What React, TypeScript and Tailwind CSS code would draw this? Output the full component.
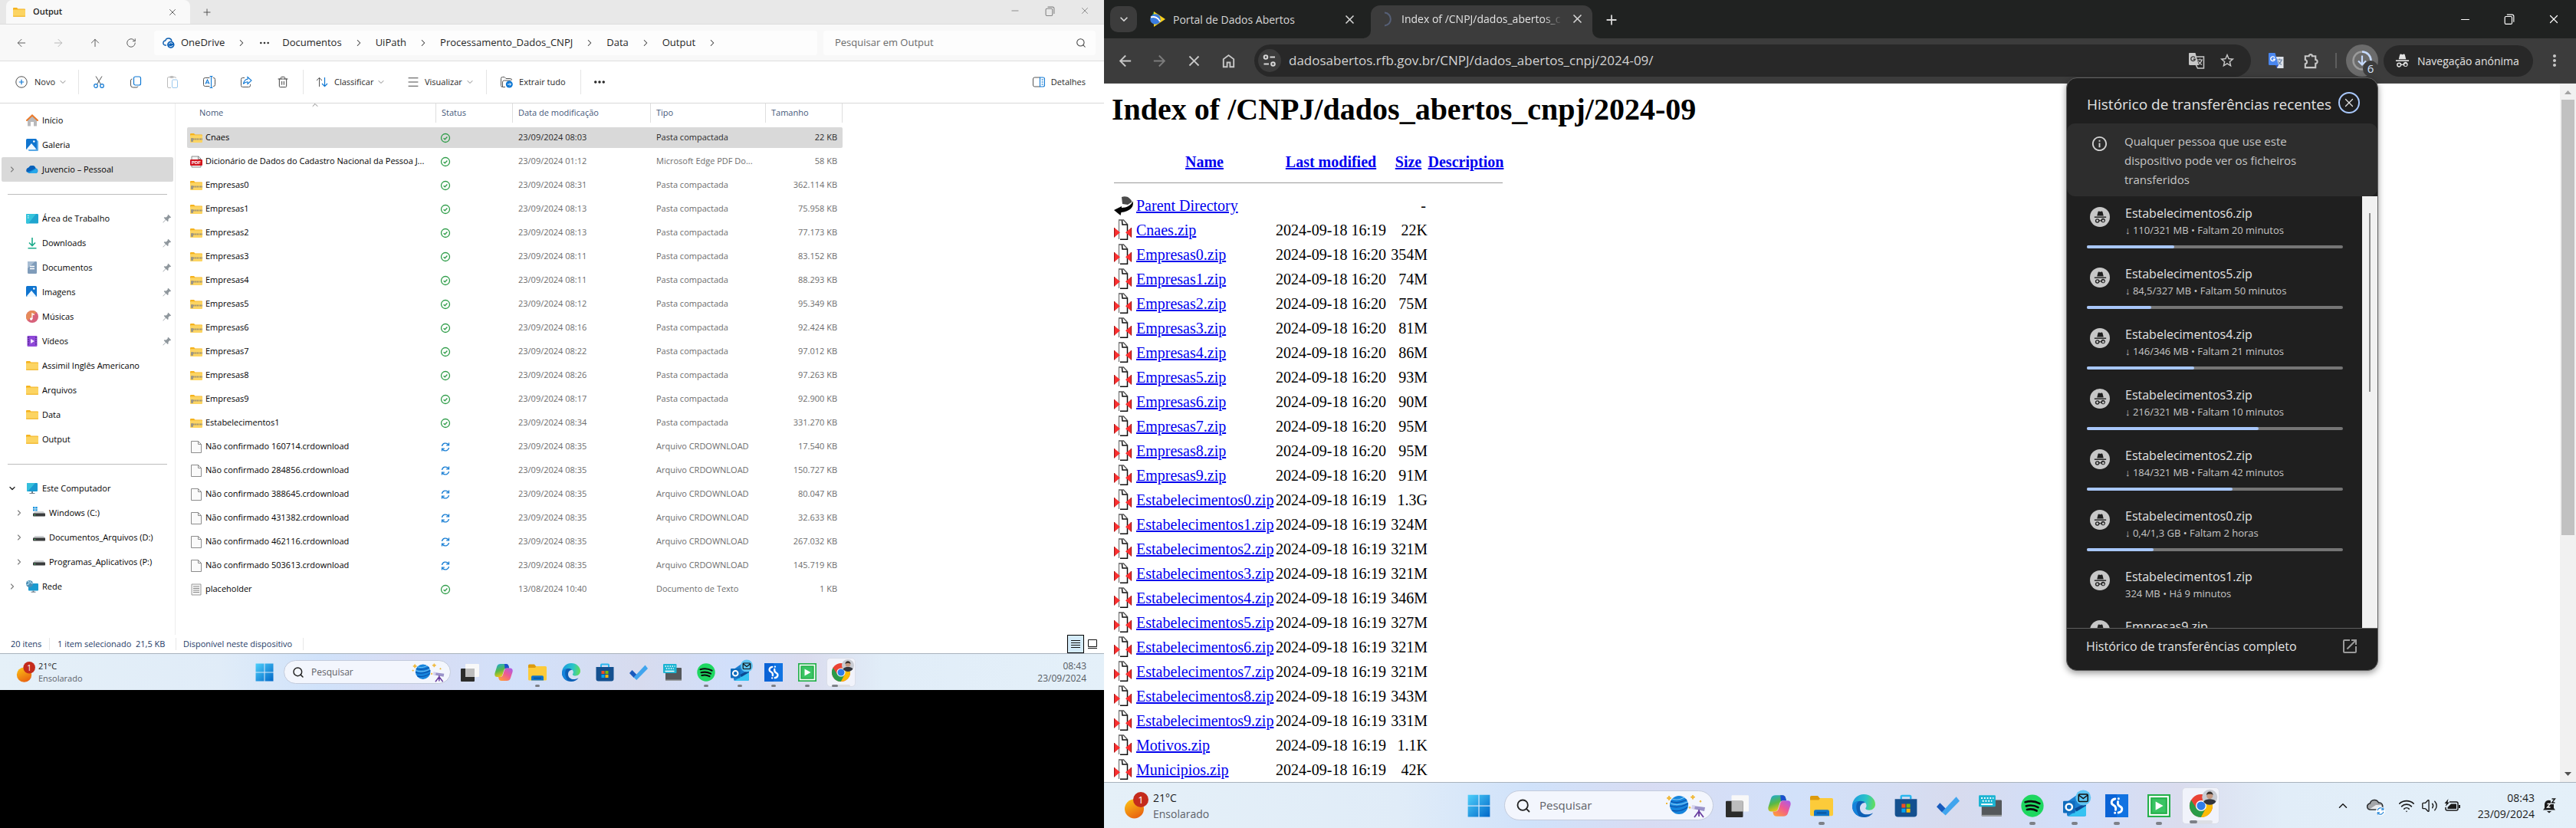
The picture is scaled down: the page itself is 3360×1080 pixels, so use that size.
import React from "react";
import {
  ArrowLeft, ArrowRight, ArrowUp, RotateCw, ChevronRight, ChevronDown, ChevronUp, Plus, X, Minus, Search,
  Ellipsis, Trash2, Wifi, Volume2, Menu,
} from "lucide-react";
import { MdArrowBack, MdArrowForward, MdClose, MdStarBorder, MdMoreVert, MdOpenInNew, MdInfoOutline, MdAdd, MdExpandMore } from "react-icons/md";

type IconProps = { className?: string };

/* ---------- file explorer icons ---------- */

function FolderIcon({ className = "size-4" }: IconProps) {
  return (
    <svg viewBox="0 0 16 16" className={className} aria-hidden="true">
      <path d="M0 3a1 1 0 0 1 1-1h4l1.5 1.5H15a1 1 0 0 1 1 1V8H0z" fill="#f5b21d" />
      <path d="M0 5.500a1 1 0 0 1 1-1h14a1 1 0 0 1 1 1V13a1 1 0 0 1-1 1H1a1 1 0 0 1-1-1z" fill="#fcd462" />
      <path d="M0 12.500h16V13a1 1 0 0 1-1 1H1a1 1 0 0 1-1-1z" fill="#f3bd3d" />
    </svg>
  );
}

function ZipIcon() {
  return (
    <svg viewBox="0 0 16 16" className="size-4" aria-hidden="true">
      <path d="M0 3a1 1 0 0 1 1-1h4l1.5 1.5H15a1 1 0 0 1 1 1V8H0z" fill="#f5b21d" />
      <path d="M0 5a1 1 0 0 1 1-.7h14a1 1 0 0 1 1 1V13a1 1 0 0 1-1 1H1a1 1 0 0 1-1-1z" fill="#fcd462" />
      <path d="M2 9.400h14" stroke="#8b8577" strokeWidth="2" strokeDasharray="1.4 .8" />
      <rect x="1" y="8" width="3" height="5" rx="1" fill="#9c9686" />
    </svg>
  );
}

function PdfIcon() {
  return (
    <svg viewBox="0 0 16 16" className="size-4" aria-hidden="true">
      <path d="M2 1h9l3 3v11H2z" fill="#f5f5f5" stroke="#8a8a8a" />
      <path d="M10.500 1v3.500H14" fill="none" stroke="#8a8a8a" />
      <rect x="0" y="5" width="16" height="8" rx="1" fill="#d2141e" />
      <text x="8" y="11.200" fontSize="6" fontWeight="700" fill="#fff" textAnchor="middle" fontFamily="Liberation Sans, sans-serif">PDF</text>
    </svg>
  );
}

function BlankFileIcon() {
  return (
    <svg viewBox="0 0 16 16" className="size-4" aria-hidden="true">
      <path d="M1.500.5h9l4 4v11h-13z" fill="#fafafa" stroke="#8c8c8c" />
      <path d="M10.500.5v4h4" fill="none" stroke="#8c8c8c" />
    </svg>
  );
}

function TextFileIcon() {
  return (
    <svg viewBox="0 0 16 16" className="size-4" aria-hidden="true">
      <path d="M2 1h12v14H2z" fill="#f4f4f4" stroke="#9a9a9a" />
      <path d="M4 4h8M4 6.500h8M4 9h8M4 11.500h8" stroke="#8a8a8a" />
    </svg>
  );
}

function SyncedIcon() {
  return (
    <svg viewBox="0 0 14 14" className="size-3.5" role="img" aria-label="Disponível neste dispositivo">
      <circle cx="7" cy="7" r="5.500" fill="none" stroke="#2f9d49" strokeWidth="1.300" />
      <path d="m4.600 7.200 1.700 1.600 3.100-3.300" fill="none" stroke="#2f9d49" strokeWidth="1.300" />
    </svg>
  );
}

function SyncingIcon({ className = "size-3.5" }: IconProps) {
  return (
    <svg viewBox="0 0 14 14" className={className} role="img" aria-label="Sincronizando">
      <path d="M2.500 6a4.600 4.600 0 0 1 8.300-2M11.500 8a4.600 4.600 0 0 1-8.300 2" fill="none" stroke="#1a7fd4" strokeWidth="1.300" />
      <path d="M11.500 1.500v3.300H8.200M2.500 12.500V9.200h3.300" fill="none" stroke="#1a7fd4" strokeWidth="1.300" />
    </svg>
  );
}

function HomeColorIcon() {
  return (
    <svg viewBox="0 0 16 16" className="size-4" aria-hidden="true">
      <path d="M2 7l6-5 6 5v8.500h-4V10H6v5.500H2z" fill="#b9b9bb" />
      <path d="m1 8 7-6.600L15 8" fill="none" stroke="#ea7a2c" strokeWidth="2" strokeLinecap="round" />
    </svg>
  );
}

function PictureIcon({ stacked = false }: { stacked?: boolean }) {
  return (
    <svg viewBox="0 0 16 16" className="size-4" aria-hidden="true">
      {stacked && <rect x="3" y="2" width="13" height="14" rx="1.500" fill="#5aa9e6" />}
      <rect x="0" y="0" width="14" height="14" rx="1.500" fill="#0f74cf" />
      <path d="m1 13 6-7 6 7a1 1 0 0 1-1 1H2a1 1 0 0 1-1-1z" fill="#eef7ff" />
      <circle cx="10.300" cy="3.500" r="1.300" fill="#fff" />
    </svg>
  );
}

function CloudBlueIcon() {
  return (
    <svg viewBox="0 0 16 16" className="size-4" aria-hidden="true">
      <path d="M4 13a4 4 0 0 1-.5-7.600A5 5 0 0 1 12.600 6.500 3.300 3.300 0 0 1 12.700 13z" fill="#1490df" />
      <path d="M3.500 5.400A5 5 0 0 1 12.600 6.500L5 10.500 1 11.600A4 4 0 0 1 3.500 5.400z" fill="#0a60b8" />
      <path d="M4 13 13 7a3.300 3.300 0 0 1-.3 6z" fill="#28a8ea" />
    </svg>
  );
}

function DesktopIcon() {
  return (
    <svg viewBox="0 0 16 16" className="size-4" aria-hidden="true">
      <rect y="2" width="16" height="12.500" rx="1.200" fill="#1fa5cf" />
      <path d="M0 3.200A1.200 1.200 0 0 1 1.200 2H13L3 14.500H1.200A1.200 1.200 0 0 1 0 13.300z" fill="#35c4dc" />
      <path d="M2 4.500h1.500M2 7h1.500" stroke="#fff" />
    </svg>
  );
}

function DownloadGreenIcon() {
  return (
    <svg viewBox="0 0 16 16" className="size-4" aria-hidden="true">
      <path d="M8 1v10M4 7.500 8 11.500l4-4M2.500 14.700h11" fill="none" stroke="#1cab8b" strokeWidth="1.600" />
    </svg>
  );
}

function DocumentBlueIcon() {
  return (
    <svg viewBox="0 0 16 16" className="size-4" aria-hidden="true">
      <rect x="2" y="0" width="12" height="16" rx="1.300" fill="#7f9cba" />
      <path d="M2 1.300A1.300 1.300 0 0 1 3.300 0H12L2 9z" fill="#a8bdd3" />
      <path d="M5 6.500h6M5 9.500h6" stroke="#fff" strokeWidth="1.400" />
    </svg>
  );
}

function MusicIcon() {
  return (
    <svg viewBox="0 0 16 16" className="size-4" aria-hidden="true">
      <circle cx="8" cy="8" r="8" fill="#d7617a" />
      <path d="M8 0a8 8 0 0 0-8 8c0 2 .7 3.800 2 5.200L13.500 2.200A8 8 0 0 0 8 0z" fill="#e68a5a" />
      <path d="M8 11V4l2.800 1.600" fill="none" stroke="#fff" strokeWidth="1.300" />
      <circle cx="6.700" cy="11" r="1.700" fill="#fff" />
    </svg>
  );
}

function VideoIcon() {
  return (
    <svg viewBox="0 0 16 16" className="size-4" aria-hidden="true">
      <rect x="1.500" y="1" width="13" height="14" rx="1.200" fill="#8f48d8" />
      <path d="M3 2.500v11M13 2.500v11" stroke="#3f1d78" strokeWidth="1.300" strokeDasharray="1.500 1.300" />
      <path d="m6 5 5 3-5 3z" fill="#f5e9ff" />
    </svg>
  );
}

function MonitorIcon() {
  return (
    <svg viewBox="0 0 16 16" className="size-4" aria-hidden="true">
      <rect x="1" y="1" width="14" height="11" rx="1" fill="#1a9ad0" />
      <path d="M1 2a1 1 0 0 1 1-1h10L2 12a1 1 0 0 1-1-1z" fill="#35bfdc" />
      <path d="M7 12h2v2h2.500v1h-7v-1H7z" fill="#6f7f8c" />
    </svg>
  );
}

function DriveIcon({ system = false }: { system?: boolean }) {
  return (
    <svg viewBox="0 0 16 16" className="size-4" aria-hidden="true">
      {system && <path d="M0 0h2.500v2.500H0zM3.200 0h2.500v2.500H3.200zM0 3.200h2.500v2.300H0zM3.200 3.200h2.500v2.300H3.200z" fill="#1a93dd" />}
      <path d="M2.500 6h11L16 9H0z" fill="#cfd2d4" />
      <rect y="8.500" width="16" height="4" rx=".8" fill="#3a3c3d" />
      <rect x="1.800" y="10" width="1.300" height="1.300" fill="#4bd36b" />
    </svg>
  );
}

function NetworkIcon() {
  return (
    <svg viewBox="0 0 16 16" className="size-4" aria-hidden="true">
      <rect x="3" y="4" width="13" height="9.500" rx="1" fill="#1a9ad0" />
      <path d="M8.500 13.500h2v1.300h2v.9h-6v-.9h2z" fill="#6f7f8c" />
      <circle cx="4.500" cy="4.500" r="4.500" fill="#4e8fb5" />
      <path d="M2 1.200c2 0 2.500 2 1.500 3.500S.8 5.500.2 6M5.500.8C5 3 7 4 8.800 4" fill="none" stroke="#a9d5ea" strokeWidth="1.200" />
    </svg>
  );
}

function PinIcon() {
  return (
    <svg viewBox="0 0 12 12" className="size-3" aria-hidden="true">
      <path d="m7.500.8 3.700 3.700-1 .8-.8-.2-1.900 2 .1 2.200-.9.8-2.300-2.300L.8 11.400l-.4-.4 3.500-3.600L1.700 5.100l.8-.8 2.300.1 2-1.900-.2-.8z" fill="#8f979d" />
    </svg>
  );
}

function OneDriveSyncIcon() {
  return (
    <svg viewBox="0 0 16 16" className="size-4" aria-hidden="true">
      <path d="M5 11H4a3 3 0 0 1-.3-6A4.300 4.300 0 0 1 12 5.500" fill="none" stroke="#0f5fb0" strokeWidth="1.400" />
      <circle cx="10.800" cy="10.300" r="4.700" fill="#0f62b8" />
      <path d="M8.300 9.600a2.700 2.700 0 0 1 4.700-.8M13.300 11a2.700 2.700 0 0 1-4.700.8" fill="none" stroke="#fff" />
    </svg>
  );
}

/* ---------- explorer toolbar icons ---------- */

function NewIcon() {
  return (
    <svg viewBox="0 0 16 16" className="size-4" fill="none" aria-hidden="true">
      <circle cx="8" cy="8" r="7.200" stroke="#505050" />
      <path d="M8 4.800v6.400M4.800 8h6.400" stroke="#0f78d4" strokeWidth="1.200" />
    </svg>
  );
}
function CutIcon() {
  return (
    <svg viewBox="0 0 16 16" className="size-4" fill="none" aria-hidden="true">
      <path d="M4 .5 10.500 11M12 .5 5.500 11" stroke="#555" />
      <circle cx="4" cy="13" r="2.300" stroke="#0f78d4" strokeWidth="1.200" />
      <circle cx="12" cy="13" r="2.300" stroke="#0f78d4" strokeWidth="1.200" />
    </svg>
  );
}
function CopyIcon() {
  return (
    <svg viewBox="0 0 16 16" className="size-4" fill="none" aria-hidden="true">
      <rect x="5.500" y="1" width="9" height="11" rx="2" stroke="#0f78d4" strokeWidth="1.200" />
      <path d="M3.500 4A2 2 0 0 0 1.500 6v6a3 3 0 0 0 3 3H9a2 2 0 0 0 2-1.500" stroke="#555" />
    </svg>
  );
}
function PasteIcon() {
  return (
    <svg viewBox="0 0 16 16" className="size-4" fill="none" aria-hidden="true">
      <path d="M6 15.500H3a1.500 1.500 0 0 1-1.500-1.500V3A1.500 1.500 0 0 1 3 1.500h8A1.500 1.500 0 0 1 12.500 3" stroke="#bcbcbc" />
      <rect x="4.500" y=".5" width="5" height="2" rx="1" stroke="#bcbcbc" />
      <rect x="7.500" y="5" width="7" height="10.500" rx="1.500" stroke="#9cc9ee" />
    </svg>
  );
}
function RenameIcon() {
  return (
    <svg viewBox="0 0 16 16" className="size-4" fill="none" aria-hidden="true">
      <path d="M8.500 2.500h-6a2 2 0 0 0-2 2v7a2 2 0 0 0 2 2h6M12.500 2.500h1a2 2 0 0 1 2 2v7a2 2 0 0 1-2 2h-1" stroke="#555" />
      <path d="M10.500.5v15M8.500.5h4M8.500 15.500h4M3 10.500 5.500 5 8 10.500M3.800 9h3.400" stroke="#0f78d4" strokeWidth="1.100" />
    </svg>
  );
}
function ShareIcon() {
  return (
    <svg viewBox="0 0 16 16" className="size-4" fill="none" aria-hidden="true">
      <path d="M6 2.500H3.500a2 2 0 0 0-2 2v8a2 2 0 0 0 2 2h8a2 2 0 0 0 2-2V11" stroke="#555" />
      <path d="M10 1.500v2.700C6.500 4.500 5 7 4.500 10.500 6 8.500 7.500 7.700 10 7.700v2.800L15 6z" stroke="#0f78d4" strokeWidth="1.100" />
    </svg>
  );
}
function SortIcon() {
  return (
    <svg viewBox="0 0 16 16" className="size-4" fill="none" aria-hidden="true">
      <path d="M4.500 14V2.500M1 6l3.500-3.700L8 6" stroke="#555" />
      <path d="M11.500 2v11.500M8 10l3.500 3.700L15 10" stroke="#0f78d4" strokeWidth="1.200" />
    </svg>
  );
}
function ExtractIcon() {
  return (
    <svg viewBox="0 0 16 16" className="size-4" fill="none" aria-hidden="true">
      <path d="M6 14.500H2.500a2 2 0 0 1-2-2V3.500a2 2 0 0 1 2-2H5l2 2h5.500a2 2 0 0 1 2 2M2.500 14V8a2 2 0 0 1 2-2h9" stroke="#555" />
      <circle cx="11.300" cy="11" r="4.500" fill="#0f78d4" />
      <path d="M9 11h4.500M11.700 9.200l1.800 1.800-1.800 1.800" stroke="#fff" />
    </svg>
  );
}
function DetailsPaneIcon() {
  return (
    <svg viewBox="0 0 16 16" className="size-4" fill="none" aria-hidden="true">
      <path d="M9.500 2h-7a2 2 0 0 0-2 2v8a2 2 0 0 0 2 2h7" stroke="#555" />
      <path d="M9.500 2h4a2 2 0 0 1 2 2v8a2 2 0 0 1-2 2h-4zM11.500 5h2.500M11.500 8h2.500M11.500 11h2.500" stroke="#0f78d4" strokeWidth="1.100" />
    </svg>
  );
}
function RestoreIcon({ className = "size-3" }: IconProps) {
  return (
    <svg viewBox="0 0 12 12" className={className} fill="none" stroke="currentColor" aria-hidden="true">
      <rect x="1" y="3" width="8" height="8.500" rx="1.300" />
      <path d="M3.300 1h5.900A1.800 1.800 0 0 1 11 2.800v6.500" />
    </svg>
  );
}

/* ---------- taskbar icons ---------- */

function WindowsIcon({ className }: IconProps) {
  return (
    <svg viewBox="0 0 24 24" className={className} aria-hidden="true">
      <defs>
        <linearGradient id="win" x1="0" y1="0" x2="1" y2="1">
          <stop offset="0" stopColor="#4fd0fb" />
          <stop offset="1" stopColor="#0067c8" />
        </linearGradient>
      </defs>
      <path d="M.5.5h11v11H.5zM12.500.5h11v11h-11zM.5 12.500h11v11H.5zM12.500 12.500h11v11h-11z" fill="url(#win)" />
    </svg>
  );
}

function SearchArt({ className }: IconProps) {
  return (
    <svg viewBox="0 0 54 32" className={className} aria-hidden="true">
      <circle cx="18" cy="15" r="12" fill="#1684dc" />
      <path d="M7 10c7 3 15 1 21-2M6 16c8 3 17 1 24-3M9 22c7 2 14 0 20-4" fill="none" stroke="#0a4ea8" strokeWidth="1.300" />
      <path d="M9 7c6 2 11 1 16-2M7 13c8 3 16 1 22-2" fill="none" stroke="#7cc8f7" strokeWidth="1.200" />
      <path d="m5 3 1 2 2 1-2 1-1 2-1-2-2-1 2-1zM36 2l1 2 2 .6-2 1-1 2-1-2-2-1 2-.6zM2 12l1 1-1 1-1-1zM46 9l1 1.200-1 1.200-1-1.200zM32 17l1 1.300-1 1.300-1-1.300z" fill="#f0b93a" stroke="#f0b93a" />
      <path d="m36 16 16 2-1 5-15-3z" fill="#9a93c9" />
      <path d="m35 15 4 .6-.8 5-4-.7z" fill="#d6d3ee" />
      <path d="M44 21v3M44 23l-6 8M44 23l6 8M44 23v7" stroke="#6b3fa0" strokeWidth="1.800" />
    </svg>
  );
}

function TaskViewIcon({ className }: IconProps) {
  return (
    <svg viewBox="0 0 24 24" className={className} aria-hidden="true">
      <rect x="6" y="1" width="18" height="17" rx="1" fill="#f8f8f8" />
      <rect x="0" y="7" width="18" height="17" rx="1" fill="#2c2c2b" />
      <rect x="6" y="7" width="12" height="11" fill="#bdbdbd" />
    </svg>
  );
}

function CopilotIcon({ className }: IconProps) {
  return (
    <svg viewBox="0 0 24 24" className={className} aria-hidden="true">
      <defs>
        <linearGradient id="copA" x1="0" y1="0" x2=".4" y2="1">
          <stop offset="0" stopColor="#1aa8e0" />
          <stop offset=".55" stopColor="#58b947" />
          <stop offset="1" stopColor="#f3c614" />
        </linearGradient>
        <linearGradient id="copB" x1="1" y1="0" x2=".2" y2="1">
          <stop offset="0" stopColor="#a35bf2" />
          <stop offset=".5" stopColor="#ef5a92" />
          <stop offset="1" stopColor="#ff9c3a" />
        </linearGradient>
      </defs>
      <path d="M8 1h7c2 0 3 1 3.500 3l.7 2.500h-3.400c-2 0-3 1-3.600 3L10.500 15c-.6 2-1.500 3-3.500 3H3.500C.8 18-.2 16 .5 13L3.300 4C4 2 5.500 1 8 1z" fill="url(#copA)" />
      <path d="M13 1h2c2 0 3 1 3.500 3l.7 2.500h-3.400c-1 0-1.600.3-2.300.8z" fill="#1c4fd0" />
      <path d="M16 23H9c-2 0-3-1-3.500-3L5 18h2.500c2 0 3-1 3.600-3l1.700-5.500c.6-2 1.500-3 3.500-3h4.200c2.700 0 3.700 2 3 5L20.700 20c-.7 2-2.200 3-4.700 3z" fill="url(#copB)" />
    </svg>
  );
}

function ExplorerIcon({ className }: IconProps) {
  return (
    <svg viewBox="0 0 24 24" className={className} aria-hidden="true">
      <path d="M0 3a1.500 1.500 0 0 1 1.500-1.500H8L10 4h12v5H0z" fill="#dd9b0e" />
      <path d="M0 6h9l1.500-2H22.500A1.500 1.500 0 0 1 24 5.500V21a1.500 1.500 0 0 1-1.500 1.500h-21A1.500 1.500 0 0 1 0 21z" fill="#fccb3a" />
      <path d="M4 22.500V18a1.800 1.800 0 0 1 1.800-1.800h12.400A1.800 1.800 0 0 1 20 18v4.500z" fill="#0f74c9" />
      <path d="M7 19.500h10" stroke="#0a4f94" strokeWidth="1.300" />
    </svg>
  );
}

function EdgeIcon({ className }: IconProps) {
  return (
    <svg viewBox="0 0 24 24" className={className} aria-hidden="true">
      <defs>
        <linearGradient id="edgeA" x1="0" y1=".3" x2="1" y2=".4">
          <stop offset="0" stopColor="#1a9be0" />
          <stop offset=".6" stopColor="#2bc4c8" />
          <stop offset="1" stopColor="#62de5c" />
        </linearGradient>
      </defs>
      <path d="M0 11C.8 4.500 6 0 12 0c7 0 12 5 12 10.300 0 3.700-2.800 6.200-6.300 6.200-2.500 0-3.900-1-3.900-1.800 0-.7 1-1.200 1-3C14.800 9 12.500 7.500 9 7.500 4.500 7.500 1.500 9 0 11z" fill="url(#edgeA)" />
      <path d="M0 12C.3 9.500 4 7 8.500 7c2.500 0 4 .7 5 1.700-3.600 0-5.500 2.600-5.500 5.800 0 5 5 7.500 10 6.300 1.500-.4 2.800-1 3.600-1.500C19.500 22.500 16 24 12 24 5.500 24-.2 19 0 12z" fill="#0d5fb5" />
      <path d="M0 12C.3 9.500 3 7.500 7 7.100 3 9 3.300 17 7.500 23.100 3 21.300-.2 17 0 12z" fill="#1483dc" />
    </svg>
  );
}

function StoreIcon({ className }: IconProps) {
  return (
    <svg viewBox="0 0 24 24" className={className} aria-hidden="true">
      <path d="M7 5V2.500A1 1 0 0 1 8 1.500h8a1 1 0 0 1 1 1V5" fill="none" stroke="#2bb7ef" strokeWidth="2" />
      <path d="M.5 5h23v15.500a3 3 0 0 1-3 3h-17a3 3 0 0 1-3-3z" fill="#14508f" />
      <path d="M7.500 10h4v4h-4z" fill="#f25022" />
      <path d="M12.500 10h4v4h-4z" fill="#7fba00" />
      <path d="M7.500 15h4v4h-4z" fill="#00a4ef" />
      <path d="M12.500 15h4v4h-4z" fill="#ffb900" />
    </svg>
  );
}

function TodoIcon({ className }: IconProps) {
  return (
    <svg viewBox="0 0 24 24" className={className} aria-hidden="true">
      <path d="m3.500 9 6 6-3.800 4L0 13z" fill="#185abd" />
      <path d="M5.500 18.500 20.500 2.500 24 7 9.300 22z" fill="#41a5ee" />
    </svg>
  );
}

function KeyboardAppIcon({ className }: IconProps) {
  return (
    <svg viewBox="0 0 24 24" className={className} aria-hidden="true">
      <rect x="3" y="6" width="21" height="17" rx="1" fill="#55585b" />
      <rect x="3" y="21.500" width="21" height="1.500" fill="#9b9ea1" />
      <rect x="0" y="1" width="17.500" height="12" rx="1" fill="#1bb4d2" />
      <path d="M2.500 4h13M3.800 7h10" stroke="#fff" strokeWidth="1.500" strokeDasharray="1.500 1.500" />
      <path d="M2.500 10.500h12" stroke="#fff" strokeWidth="1.500" />
    </svg>
  );
}

function SpotifyIcon({ className }: IconProps) {
  return (
    <svg viewBox="0 0 24 24" className={className} aria-hidden="true">
      <circle cx="12" cy="12" r="11.700" fill="#1ed760" />
      <path d="M4.500 8.200c5-1.500 10.500-1 15 1.500M5.500 12.300c4.300-1.200 8.700-.7 12.500 1.400M6.300 16c3.600-1 7-.6 10.200 1.200" fill="none" stroke="#0a0a0a" strokeWidth="2.100" strokeLinecap="round" />
    </svg>
  );
}

function OutlookIcon({ className }: IconProps) {
  return (
    <svg viewBox="0 0 24 24" className={className} aria-hidden="true" overflow="visible">
      <path d="M4 8 14 1l10 7v13a2 2 0 0 1-2 2H6a2 2 0 0 1-2-2z" fill="#1c7fd1" />
      <path d="M24 11v10a2 2 0 0 1-2 2H5z" fill="#35c3f2" />
      <path d="M12 15 24 9v3l-10 6z" fill="#0b4a94" />
      <rect x="0" y="7" width="12.500" height="12.500" rx="1" fill="#0f6cbd" />
      <circle cx="6.200" cy="13.200" r="3.300" fill="none" stroke="#fff" strokeWidth="2" />
      <circle cx="21" cy="3.500" r="8" fill="#5cc4f2" />
      <rect x="16.200" y="0" width="9.600" height="7.500" rx="1" fill="none" stroke="#111" strokeWidth="1.200" />
      <path d="m16.500 1 4.500 3.500L25.500 1" fill="none" stroke="#111" strokeWidth="1.200" />
    </svg>
  );
}

function SquareSIcon({ className }: IconProps) {
  return (
    <svg viewBox="0 0 24 24" className={className} aria-hidden="true">
      <rect width="24" height="24" fill="#1173e2" />
      <path d="M0 0h12v24H0z" fill="#0a63d6" />
      <g fill="none" stroke="#fff" strokeWidth="2.300" strokeLinecap="round">
        <path d="M10.300 4.800C6 5.500 5.300 9.800 8.800 11.500c2 1 2.400 2.700 2 4.700" />
        <path d="M13.700 19.200c4.300-.7 5-5 1.500-6.700-2-1-2.400-2.700-2-4.700" />
        <path d="M13.900 4.600v.1M10.100 19.400v.1" />
      </g>
    </svg>
  );
}

function GreenPlayIcon({ className }: IconProps) {
  return (
    <svg viewBox="0 0 24 24" className={className} aria-hidden="true">
      <rect width="24" height="24" fill="#25b04b" />
      <rect x="2.500" y="2.500" width="19" height="19" fill="none" stroke="#fff" strokeWidth="1.600" />
      <rect x="5" y="5" width="14" height="14" fill="#39c463" />
      <path d="m8.500 7.500 8 4.500-8 4.500z" fill="#fff" />
    </svg>
  );
}

function ChromeIcon({ className }: IconProps) {
  return (
    <svg viewBox="0 0 24 24" className={className} aria-hidden="true" overflow="visible">
      <circle cx="12" cy="12" r="12" fill="#ea4335" />
      <path d="M1.600 6 7.200 14.750 16.800 14.750 12 24A12 12 0 0 1 1.600 6z" fill="#2a9c48" />
      <path d="M12 6.500h10.700A12 12 0 0 1 11.900 24l4.900-9.250z" fill="#fbbc05" />
      <circle cx="12" cy="12" r="5.600" fill="#fff" />
      <circle cx="12" cy="12" r="4.500" fill="#2f7de9" />
      <circle cx="21" cy="3" r="8" fill="#c9ccd3" />
      <path d="M14.500 7.500c2-2 4-2.500 6.500-2.500s5 .5 6.500 2.500A8 8 0 0 1 21 11a8 8 0 0 1-6.500-3.500z" fill="#33363d" />
      <circle cx="21" cy="1.500" r="3.300" fill="#c49a82" />
      <path d="M17.500 1c0-5 7-5 7 0-1-1.500-6-1.500-7 0z" fill="#3a322e" />
    </svg>
  );
}

const taskApps = [
  { name: "Visão de tarefas", Icon: TaskViewIcon, state: "none" },
  { name: "Copilot", Icon: CopilotIcon, state: "none" },
  { name: "Explorador de Arquivos", Icon: ExplorerIcon, state: "open" },
  { name: "Edge", Icon: EdgeIcon, state: "none" },
  { name: "Loja", Icon: StoreIcon, state: "none" },
  { name: "To Do", Icon: TodoIcon, state: "none" },
  { name: "Teclado", Icon: KeyboardAppIcon, state: "none" },
  { name: "Spotify", Icon: SpotifyIcon, state: "open" },
  { name: "Outlook", Icon: OutlookIcon, state: "open" },
  { name: "Studio", Icon: SquareSIcon, state: "open" },
  { name: "Assistente", Icon: GreenPlayIcon, state: "open" },
  { name: "Chrome", Icon: ChromeIcon, state: "active" },
];

function Taskbar({ big = false }: { big?: boolean }) {
  return (
    <footer
      className={
        "grid grid-cols-[1fr_auto_1fr] items-center border-t border-[#a9b3bd] bg-[linear-gradient(90deg,#e5f0f8_0%,#e0ecf8_20%,#d0e2fa_29%,#d8dcf3_37%,#d2e1fa_47%,#d7dbee_58%,#d1dffa_66%,#dadcee_73%,#e1edf8_80%,#e4f0f9_100%)] " +
        (big ? "h-[60px]" : "h-12")
      }
    >
      <div className={big ? "flex items-center gap-1.5 pl-[26px]" : "flex items-center gap-1 pl-[21px]"}>
        <svg viewBox="0 0 32 36" className={big ? "h-9 w-8" : "h-7 w-[25px]"} aria-hidden="true">
          <defs>
            <linearGradient id="sun" x1=".2" y1="0" x2=".7" y2="1">
              <stop offset="0" stopColor="#fbc015" />
              <stop offset="1" stopColor="#e85f10" />
            </linearGradient>
          </defs>
          <circle cx="13.500" cy="22" r="12.500" fill="url(#sun)" />
          <circle cx="22" cy="10" r="10" fill="#c42b1c" />
          <text x="22" y="15" fontSize="13" fill="#fff" textAnchor="middle" fontFamily="Open Sans, sans-serif">1</text>
        </svg>
        <div className={big ? "text-[14px] leading-[21px] text-[#1b1b1b]" : "text-[11px] leading-4 text-[#1b1b1b]"}>
          <p>21°C</p>
          <p className="text-[#5c6168]">Ensolarado</p>
        </div>
      </div>

      <div className={big ? "flex items-center pl-3" : "flex items-center pl-3"}>
        <button aria-label="Iniciar" className={big ? "mr-[18px]" : "mr-[13px]"}>
          <WindowsIcon className={big ? "size-[30px]" : "size-6"} />
        </button>
        <label
          className={
            "flex items-center rounded-full border border-[#c3cbdc] bg-[#f3f6fd] " +
            (big ? "mr-[3px] h-[39px] w-[273px] pl-3.5" : "mr-[3px] h-[31px] w-[218px] pl-2.5")
          }
        >
          <Search className={big ? "size-5 text-[#222]" : "size-4 text-[#222]"} strokeWidth={2.2} />
          <input
            aria-label="Pesquisar"
            placeholder="Pesquisar"
            className={
              "min-w-0 flex-1 bg-transparent outline-none placeholder:text-[#5d6066] " +
              (big ? "ml-[11px] text-[15px]" : "ml-[9px] text-[12px]")
            }
          />
          <SearchArt className={big ? "mr-2 h-8 w-[54px]" : "mr-1.5 h-[26px] w-11"} />
        </label>
        {taskApps.map(({ name, Icon, state }) => (
          <button
            key={name}
            aria-label={name}
            className={"relative flex items-center justify-center " + (big ? "h-[58px] w-[55px]" : "h-[46px] w-11")}
          >
            {state === "active" && (
              <span
                className={
                  "absolute rounded-[5px] border border-[#dadee9] bg-[#f1f3fb] " + (big ? "inset-x-[3px] inset-y-[5px]" : "inset-x-[3px] inset-y-1")
                }
              />
            )}
            <Icon className={big ? "relative size-[30px]" : "relative size-6"} />
            {state === "open" && (
              <span className={"absolute rounded-full bg-[#7d8087] " + (big ? "bottom-1 h-1 w-2" : "bottom-1 h-[3px] w-1.5")} />
            )}
            {state === "active" && (
              <span className={"absolute flex rounded-full bg-[#dcdee4] " + (big ? "bottom-1.5 h-1 w-[30px]" : "bottom-1 h-[3px] w-6")}>
                <span className={"rounded-full bg-[#7d8087] " + (big ? "w-2.5" : "w-2")} />
              </span>
            )}
          </button>
        ))}
      </div>

      <div className={big ? "flex items-center justify-end pr-[26px]" : "flex items-center justify-end pr-[23px]"}>
        {big && (
          <div className="mr-[22px] flex items-center text-[#1b1b1b]">
            <ChevronUp className="mr-[22px] size-[18px]" strokeWidth={2} />
            <span className="relative mr-[19px]">
              <svg viewBox="0 0 22 18" className="h-[18px] w-[22px]" aria-hidden="true">
                <path d="M5 14a4 4 0 0 1-.7-8A6 6 0 0 1 15.500 5 4.500 4.500 0 0 1 17 14z" fill="#a4a6a9" stroke="#26282a" strokeWidth="1.500" />
                <path d="M4 13.200 12 8h7l.5 3.500-3 1.700z" fill="#e9ebee" />
              </svg>
              <SyncingIcon className="absolute -right-0.5 -bottom-1 size-3 rounded-full bg-white" />
            </span>
            <Wifi className="mr-2 size-[22px]" strokeWidth={1.8} />
            <Volume2 className="mr-2 size-[22px]" strokeWidth={1.5} />
            <svg viewBox="0 0 22 18" className="h-[18px] w-[22px]" aria-hidden="true">
              <path d="M7 4h9a2 2 0 0 1 2 2v7a2 2 0 0 1-2 2H4a2 2 0 0 1-2-2v-2" fill="none" stroke="#1b1b1b" strokeWidth="1.500" />
              <path d="M9 6.500h7v6.500H4.500v-2zM19 8h2v4h-2zM5.500 0 .5 6H3L1.800 10 7 4.500H4.500z" fill="#1b1b1b" />
            </svg>
          </div>
        )}
        <div className={big ? "text-right text-[14px] leading-[21px] text-[#1b1b1b]" : "text-right text-[12px] leading-4 text-[#555a61]"}>
          <p>08:43</p>
          <p>23/09/2024</p>
        </div>
        {big && (
          <svg viewBox="0 0 18 20" className="ml-2.5 h-5 w-[18px]" aria-hidden="true">
            <path d="M1 15.500 3 13V8a5.500 5.500 0 0 1 8-4.700V8h4v5l2 2.500zM6 17h6l-3 2.500z" fill="#1b1b1b" />
            <path d="M12.500 1h4l-4 5h4" fill="none" stroke="#1b1b1b" strokeWidth="1.400" />
            <path d="M6.500 7.500h4l-4 4.500h4" fill="none" stroke="#fff" strokeWidth="1.300" />
          </svg>
        )}
      </div>
    </footer>
  );
}

/* ---------- file explorer ---------- */

type FileRow = { name: string; date: string; type: string; size: string; kind: "zip" | "pdf" | "part" | "txt" };
const ZIP = "Pasta compactada";
const PART = "Arquivo CRDOWNLOAD";
const files: FileRow[] = [
  { name: "Cnaes", date: "23/09/2024 08:03", type: ZIP, size: "22 KB", kind: "zip" },
  { name: "Dicionário de Dados do Cadastro Nacional da Pessoa J...", date: "23/09/2024 01:12", type: "Microsoft Edge PDF Do...", size: "58 KB", kind: "pdf" },
  { name: "Empresas0", date: "23/09/2024 08:31", type: ZIP, size: "362.114 KB", kind: "zip" },
  { name: "Empresas1", date: "23/09/2024 08:13", type: ZIP, size: "75.958 KB", kind: "zip" },
  { name: "Empresas2", date: "23/09/2024 08:13", type: ZIP, size: "77.173 KB", kind: "zip" },
  { name: "Empresas3", date: "23/09/2024 08:11", type: ZIP, size: "83.152 KB", kind: "zip" },
  { name: "Empresas4", date: "23/09/2024 08:11", type: ZIP, size: "88.293 KB", kind: "zip" },
  { name: "Empresas5", date: "23/09/2024 08:12", type: ZIP, size: "95.349 KB", kind: "zip" },
  { name: "Empresas6", date: "23/09/2024 08:16", type: ZIP, size: "92.424 KB", kind: "zip" },
  { name: "Empresas7", date: "23/09/2024 08:22", type: ZIP, size: "97.012 KB", kind: "zip" },
  { name: "Empresas8", date: "23/09/2024 08:26", type: ZIP, size: "97.263 KB", kind: "zip" },
  { name: "Empresas9", date: "23/09/2024 08:17", type: ZIP, size: "92.900 KB", kind: "zip" },
  { name: "Estabelecimentos1", date: "23/09/2024 08:34", type: ZIP, size: "331.270 KB", kind: "zip" },
  { name: "Não confirmado 160714.crdownload", date: "23/09/2024 08:35", type: PART, size: "17.540 KB", kind: "part" },
  { name: "Não confirmado 284856.crdownload", date: "23/09/2024 08:35", type: PART, size: "150.727 KB", kind: "part" },
  { name: "Não confirmado 388645.crdownload", date: "23/09/2024 08:35", type: PART, size: "80.047 KB", kind: "part" },
  { name: "Não confirmado 431382.crdownload", date: "23/09/2024 08:35", type: PART, size: "32.633 KB", kind: "part" },
  { name: "Não confirmado 462116.crdownload", date: "23/09/2024 08:35", type: PART, size: "267.032 KB", kind: "part" },
  { name: "Não confirmado 503613.crdownload", date: "23/09/2024 08:35", type: PART, size: "145.719 KB", kind: "part" },
  { name: "placeholder", date: "13/08/2024 10:40", type: "Documento de Texto", size: "1 KB", kind: "txt" },
];
const fileIcons = { zip: <ZipIcon />, pdf: <PdfIcon />, part: <BlankFileIcon />, txt: <TextFileIcon /> };

function SideItem({
  icon, label, chevron, pinned, nested, selected,
}: { icon: React.ReactNode; label: string; chevron?: "right" | "down"; pinned?: boolean; nested?: boolean; selected?: boolean }) {
  return (
    <li>
      <button
        className={
          "flex h-8 w-full items-center rounded-[2px] text-left " + (nested ? "pl-[17px] " : "pl-2 ") + (selected ? "bg-[#d9d9d9]" : "")
        }
      >
        <span className="flex w-6 items-center">
          {chevron === "right" && <ChevronRight className="size-3 text-[#7c7c7c]" strokeWidth={2.2} />}
          {chevron === "down" && <ChevronDown className="size-3 text-[#222]" strokeWidth={2.6} />}
        </span>
        {icon}
        <span className="ml-[5px] flex-1 whitespace-nowrap text-black">{label}</span>
        {pinned && <span className="mr-0.5"><PinIcon /></span>}
      </button>
    </li>
  );
}

function ToolButton({ children, label }: { children: React.ReactNode; label: string }) {
  return (
    <button aria-label={label} className="flex w-12 justify-center">
      {children}
    </button>
  );
}

const Crumb = ({ text }: { text: string }) => (
  <>
    <a href="#" className="whitespace-nowrap text-[#1f1f1f]">{text}</a>
    <ChevronRight className="mx-[15px] size-3.5 shrink-0 text-[#3c3c3c]" strokeWidth={1.8} />
  </>
);

function Explorer() {
  return (
    <section className="flex flex-col bg-white text-[11px] text-black">
      <div className="flex h-8 items-end border-b border-[#dcdcdc] bg-[#e8e8e8] pl-2">
        <div className="flex h-[31px] w-60 items-center rounded-t-lg bg-[#f9f9f9] pr-4 pl-[9px]">
          <FolderIcon />
          <span className="ml-2.5 flex-1 font-semibold text-[#222]">Output</span>
          <button aria-label="Fechar guia"><X className="size-3.5 text-[#444]" strokeWidth={1.4} /></button>
        </div>
        <button aria-label="Nova guia" className="mb-2 ml-[15px]"><Plus className="size-3.5 text-[#444]" strokeWidth={1.5} /></button>
        <div className="mr-[18px] mb-2.5 ml-auto flex items-center gap-8 text-[#858585]">
          <button aria-label="Minimizar"><Minus className="size-3.5" strokeWidth={1.6} /></button>
          <button aria-label="Restaurar"><RestoreIcon className="size-[13px]" /></button>
          <button aria-label="Fechar"><X className="size-3.5" strokeWidth={1.6} /></button>
        </div>
      </div>

      <div className="flex h-12 items-center gap-2 border-b border-[#dedede] bg-[#f8f8f8] pr-[11px] pl-5 text-[13px]">
        <div className="flex w-[173px] items-center gap-8 text-[#555]">
          <button aria-label="Voltar"><ArrowLeft className="size-4" strokeWidth={1.4} /></button>
          <button aria-label="Avançar"><ArrowRight className="size-4 text-[#b4b4b4]" strokeWidth={1.4} /></button>
          <button aria-label="Acima"><ArrowUp className="size-4" strokeWidth={1.4} /></button>
          <button aria-label="Atualizar"><RotateCw className="size-3.5" strokeWidth={1.6} /></button>
        </div>
        <nav className="flex h-8 flex-1 items-center rounded bg-[#fdfdfd] pl-[11px]" aria-label="Caminho">
          <OneDriveSyncIcon />
          <span className="w-2" />
          <Crumb text="OneDrive" />
          <Ellipsis className="mr-[15px] size-4 text-[#333]" strokeWidth={2} />
          <Crumb text="Documentos" />
          <Crumb text="UiPath" />
          <Crumb text="Processamento_Dados_CNPJ" />
          <Crumb text="Data" />
          <Crumb text="Output" />
        </nav>
        <label className="flex h-8 w-[355px] items-center rounded bg-[#fdfdfd] pr-3 pl-[15px]">
          <input aria-label="Pesquisar" placeholder="Pesquisar em Output" className="flex-1 bg-transparent outline-none placeholder:text-[#6a6a6a]" />
          <Search className="size-3.5 text-[#444]" strokeWidth={1.8} />
        </label>
      </div>

      <div className="flex h-[55px] items-center border-b border-[#d9d9d9] text-[#1f1f1f]">
        <button className="flex items-center pr-3.5 pl-5"><NewIcon /><span className="mr-1 ml-[9px]">Novo</span><ChevronDown className="size-3 text-[#888]" /></button>
        <span className="h-8 w-px bg-[#e5e5e5]" />
        <div className="flex pr-0.5 pl-0.5">
          <ToolButton label="Recortar"><CutIcon /></ToolButton>
          <ToolButton label="Copiar"><CopyIcon /></ToolButton>
          <ToolButton label="Colar"><PasteIcon /></ToolButton>
          <ToolButton label="Renomear"><RenameIcon /></ToolButton>
          <ToolButton label="Compartilhar"><ShareIcon /></ToolButton>
          <ToolButton label="Excluir"><Trash2 className="size-4 text-[#444]" strokeWidth={1.5} /></ToolButton>
        </div>
        <span className="h-8 w-px bg-[#e5e5e5]" />
        <button className="flex w-[118px] items-center pl-4"><SortIcon /><span className="mr-1 ml-2">Classificar</span><ChevronDown className="size-3 text-[#888]" /></button>
        <button className="flex w-[120px] items-center pl-4"><Menu className="size-[18px] text-[#444]" strokeWidth={1.3} /><span className="mr-1 ml-1.5">Visualizar</span><ChevronDown className="size-3 text-[#888]" /></button>
        <span className="h-8 w-px bg-[#e5e5e5]" />
        <button className="flex w-[122px] items-center pl-[18px]"><ExtractIcon /><span className="ml-2">Extrair tudo</span></button>
        <span className="h-8 w-px bg-[#e5e5e5]" />
        <button aria-label="Mais" className="pl-[15px]"><Ellipsis className="size-[18px]" strokeWidth={2.6} /></button>
        <button className="mr-6 ml-auto flex items-center gap-2"><DetailsPaneIcon />Detalhes</button>
      </div>

      <div className="flex">
        <aside className="w-[229px] border-r border-[#ededed] px-0.5 pt-1.5 pb-[47px]">
          <ul>
            <SideItem icon={<HomeColorIcon />} label="Início" />
            <SideItem icon={<PictureIcon stacked />} label="Galeria" />
            <SideItem icon={<CloudBlueIcon />} label="Juvencio – Pessoal" chevron="right" selected />
            <li className="flex h-8 items-center px-2"><hr className="w-full border-[#bdbdbd]" /></li>
            <SideItem icon={<DesktopIcon />} label="Área de Trabalho" pinned />
            <SideItem icon={<DownloadGreenIcon />} label="Downloads" pinned />
            <SideItem icon={<DocumentBlueIcon />} label="Documentos" pinned />
            <SideItem icon={<PictureIcon />} label="Imagens" pinned />
            <SideItem icon={<MusicIcon />} label="Músicas" pinned />
            <SideItem icon={<VideoIcon />} label="Vídeos" pinned />
            <SideItem icon={<FolderIcon />} label="Assimil Inglês Americano" />
            <SideItem icon={<FolderIcon />} label="Arquivos" />
            <SideItem icon={<FolderIcon />} label="Data" />
            <SideItem icon={<FolderIcon />} label="Output" />
            <li className="flex h-8 items-center px-2"><hr className="w-full border-[#bdbdbd]" /></li>
            <SideItem icon={<MonitorIcon />} label="Este Computador" chevron="down" />
            <SideItem icon={<DriveIcon system />} label="Windows (C:)" chevron="right" nested />
            <SideItem icon={<DriveIcon />} label="Documentos_Arquivos (D:)" chevron="right" nested />
            <SideItem icon={<DriveIcon />} label="Programas_Aplicativos (P:)" chevron="right" nested />
            <SideItem icon={<NetworkIcon />} label="Rede" chevron="right" />
          </ul>
        </aside>

        <div className="flex-1 overflow-hidden pl-[15px]">
          <table className="-mt-1 w-[855px] table-fixed border-separate border-spacing-x-0 border-spacing-y-1 whitespace-nowrap">
            <colgroup>
              <col className="w-[325px]" />
              <col className="w-[100px]" />
              <col className="w-[180px]" />
              <col className="w-[150px]" />
              <col className="w-[100px]" />
            </colgroup>
            <thead>
              <tr className="h-[27px] text-left align-top text-[#44587a]">
                <th className="relative p-0 font-normal">
                  <div className="flex h-[25px] items-center border-r border-[#dedede] pl-4">Nome</div>
                  <ChevronUp className="absolute -top-1 left-[161px] size-3 text-[#666]" strokeWidth={1.6} />
                </th>
                <th className="p-0 font-normal"><div className="flex h-[25px] items-center border-r border-[#dedede] pl-[7px]">Status</div></th>
                <th className="p-0 font-normal"><div className="flex h-[25px] items-center border-r border-[#dedede] pl-[7px]">Data de modificação</div></th>
                <th className="p-0 font-normal"><div className="flex h-[25px] items-center border-r border-[#dedede] pl-[7px]">Tipo</div></th>
                <th className="p-0 font-normal"><div className="flex h-[25px] items-center border-r border-[#dedede] pl-[7px]">Tamanho</div></th>
              </tr>
            </thead>
            <tbody>
              {files.map((f, i) => (
                <tr key={f.name} className={"h-[27px] " + (i === 0 ? "bg-[#d9d9d9] text-[#2b2b2b]" : "text-[#6d6d6d]")}>
                  <td className="rounded-l-[2px] p-0 pl-1">
                    <div className="flex items-center gap-1 text-black">{fileIcons[f.kind]}{f.name}</div>
                  </td>
                  <td className="p-0 pl-[5px]">{f.kind === "part" ? <SyncingIcon /> : <SyncedIcon />}</td>
                  <td className="p-0 pl-[7px]">{f.date}</td>
                  <td className="p-0 pl-[7px]">{f.type}</td>
                  <td className="rounded-r-[2px] p-0 pr-[7px] text-right">{f.size}</td>
                </tr>
              ))}
            </tbody>
          </table>
        </div>
      </div>

      <div className="flex h-6 items-center pr-[9px] pl-3.5 text-[#243a66]">
        <span className="w-[50px]">20 itens</span>
        <span className="h-4 w-px bg-[#e8e8e8]" />
        <span className="w-[164px] pl-2.5">1 item selecionado&nbsp; 21,5 KB</span>
        <span className="h-4 w-px bg-[#e8e8e8]" />
        <span className="w-[165px] pl-[9px]">Disponível neste dispositivo</span>
        <span className="h-4 w-px bg-[#e8e8e8]" />
        <button aria-label="Detalhes" className="ml-auto flex h-6 w-[22px] items-center justify-center border border-black bg-[#d4ebf9]">
          <svg viewBox="0 0 12 12" className="size-3" aria-hidden="true"><path d="M0 1.500h12M0 4.500h12M0 7.500h12M0 10.500h12" stroke="#111" /></svg>
        </button>
        <button aria-label="Ícones grandes" className="ml-[5px]">
          <svg viewBox="0 0 12 12" className="size-3" aria-hidden="true"><path d="M.5.5h11v9H.5zM0 11.500h12" fill="none" stroke="#111" /></svg>
        </button>
      </div>
      <Taskbar />
    </section>
  );
}

/* ---------- browser ---------- */

function SpyIcon({ className }: IconProps) {
  return (
    <svg viewBox="0 0 20 20" className={className} fill="currentColor" aria-hidden="true">
      <path d="M6.500 1.500c.2-.8 1-1.200 1.700-.9L10 1.200l1.800-.6c.7-.3 1.500.1 1.700.9L15 7.500H5z" />
      <path d="M1 8.800h18v1.700H1z" />
      <path d="M5.500 12a3.300 3.300 0 1 0 3.200 4.100c.8-.5 1.800-.5 2.600 0A3.300 3.300 0 1 0 11 14.500a4 4 0 0 0-2 0A3.300 3.300 0 0 0 5.500 12zm0 1.600a1.700 1.700 0 1 1 0 3.400 1.700 1.700 0 0 1 0-3.400zm9 0a1.700 1.700 0 1 1 0 3.400 1.700 1.700 0 0 1 0-3.400z" fillRule="evenodd" />
    </svg>
  );
}

function TranslateIcon({ className, color = false }: IconProps & { color?: boolean }) {
  return (
    <svg viewBox="0 0 22 22" className={className} aria-hidden="true">
      <path d="M10 6h10.500v15H12.500L10 16z" fill={color ? "#dfe3ea" : "none"} stroke={color ? "none" : "#c7c7c7"} strokeWidth="1.500" />
      <path d="M12 10h7M15.500 8.500V10M18 10c-.7 3-2.500 5-4.500 6M13.500 12c1 2 2.500 3.500 4.500 4.500" fill="none" stroke={color ? "#6f87a8" : "#c7c7c7"} strokeWidth="1.200" />
      <path d="M1.500 1h8L14 17H2.500A1.500 1.500 0 0 1 1 15.500v-13A1.500 1.500 0 0 1 1.500 1z" fill={color ? "#4a86ee" : "#c7c7c7"} />
      {color && <path d="M10.500 17H14l-2.700 4z" fill="#2a50b8" />}
      <path d="M9 7.300A2.800 2.800 0 1 0 9.300 9.300H6.800" fill="none" stroke={color ? "#fff" : "#3c3c3c"} strokeWidth="1.400" />
    </svg>
  );
}

function BrazilIcon() {
  return (
    <svg viewBox="0 0 20 20" className="size-5" aria-hidden="true">
      <path d="M5 0 20 10 5 20z" fill="#f6cf1c" />
      <path d="M5 0v5L2 7zM5 20v-4z" fill="#1d9a45" />
      <circle cx="7" cy="10" r="6.800" fill="#3b7de0" />
      <path d="M1 7.500C6 6 11 8 13 13" fill="none" stroke="#fff" strokeWidth="2" />
    </svg>
  );
}

function ZipFileIcon() {
  return (
    <svg viewBox="0 0 24 28" className="h-7 w-6" aria-hidden="true">
      <path d="M6 1h6.500l4.500 5v20.500H6z" fill="#fff" />
      <path d="M6.500 26V1.500" fill="none" stroke="#8a8a8a" strokeWidth="1.500" />
      <path d="M6 1h6.500L17.500 6.500" fill="none" stroke="#555" strokeWidth="1.300" />
      <path d="M10.500 1.500 11 7h6.500v19.300H8" fill="none" stroke="#111" strokeWidth="1.500" />
      <path d="M.5 11v12.500L8 17.200z" fill="#fb3030" />
      <path d="M22.500 11v12.500L15 17.200z" fill="#fb3030" />
      <path d="M.5 11v12.500M22.500 11v12.500" stroke="#a01818" strokeWidth="1.300" />
    </svg>
  );
}

function BackIcon() {
  return (
    <svg viewBox="0 0 26 25" className="h-[25px] w-[26px]" aria-hidden="true">
      <path d="M10 1c4-1.500 8-.5 10 1.500 2 1.500 3 3 3.500 5L18 11l-7-1z" fill="#4b4b4b" />
      <path d="M24.500 6.500c2 7-3 13-15 14.500L8.500 25 0 18l10-5v2c7 0 12-3 14.500-8.500z" fill="#050505" />
    </svg>
  );
}

type Entry = { name: string; date: string; size: string };
const entries: Entry[] = [
  { name: "Cnaes.zip", date: "2024-09-18 16:19", size: "22K" },
  ...["354M", "74M", "75M", "81M", "86M", "93M", "90M", "95M", "95M", "91M"].map((size, i) => ({
    name: `Empresas${i}.zip`, date: "2024-09-18 16:20", size,
  })),
  ...["1.3G", "324M", "321M", "321M", "346M", "327M", "321M", "321M", "343M", "331M"].map((size, i) => ({
    name: `Estabelecimentos${i}.zip`, date: "2024-09-18 16:19", size,
  })),
  { name: "Motivos.zip", date: "2024-09-18 16:19", size: "1.1K" },
  { name: "Municipios.zip", date: "2024-09-18 16:19", size: "42K" },
];

type Download = { name: string; info?: string; progress?: number };
const downloads: Download[] = [
  { name: "Estabelecimentos6.zip", info: "↓ 110/321 MB • Faltam 20 minutos", progress: 34 },
  { name: "Estabelecimentos5.zip", info: "↓ 84,5/327 MB • Faltam 50 minutos", progress: 25 },
  { name: "Estabelecimentos4.zip", info: "↓ 146/346 MB • Faltam 21 minutos", progress: 42 },
  { name: "Estabelecimentos3.zip", info: "↓ 216/321 MB • Faltam 10 minutos", progress: 67 },
  { name: "Estabelecimentos2.zip", info: "↓ 184/321 MB • Faltam 42 minutos", progress: 57 },
  { name: "Estabelecimentos0.zip", info: "↓ 0,4/1,3 GB • Faltam 2 horas", progress: 26 },
  { name: "Estabelecimentos1.zip", info: "324 MB • Há 9 minutos" },
  { name: "Empresas9.zip" },
];

function DownloadsPopup() {
  return (
    <div
      role="dialog"
      aria-label="Histórico de transferências recentes"
      className="absolute top-[101px] right-[258px] flex h-[774px] w-[407px] flex-col overflow-hidden rounded-[14px] border border-[#5f5f5f] bg-[#1f1f1f] text-[#e3e3e3] shadow-[0_3px_8px_rgba(0,0,0,0.4)]"
    >
      <div className="flex h-[59px] items-center justify-between pt-2 pr-[23px] pl-[26px]">
        <h2 className="text-[19px] leading-6 font-medium whitespace-nowrap">Histórico de transferências recentes</h2>
        <button aria-label="Fechar" className="mb-1 flex size-7 shrink-0 items-center justify-center rounded-full border-2 border-[#a8c7fa]">
          <X className="size-[18px]" strokeWidth={1.6} />
        </button>
      </div>
      <div className="flex h-[95px] gap-[21px] rounded-[10px] bg-[#2d2d2d] pt-[11px] pr-16 pl-[31px]">
        <MdInfoOutline className="mt-1 size-[23px] shrink-0 text-[#d0d0d0]" />
        <p className="text-[15px] leading-[25px] text-[#c7c7c7]">Qualquer pessoa que use este dispositivo pode ver os ficheiros transferidos</p>
      </div>
      <div className="flex min-h-0 flex-1">
        <ul className="flex-1 overflow-hidden pl-[26px]">
          {downloads.map((d) => (
            <li key={d.name} className={d.progress === undefined ? "h-[65px] pt-[11px]" : "h-[79px] pt-[11px]"}>
              <div className="flex gap-5">
                <span className="mt-[3px] ml-1 flex size-[26px] items-center justify-center rounded-full bg-[#c7c7c7] text-[#1f1f1f]">
                  <SpyIcon className="size-[17px]" />
                </span>
                <div className="whitespace-nowrap">
                  <p className="text-[16px] leading-[23px] font-medium">{d.name}</p>
                  {d.info && <p className="text-[13px] leading-[21px] text-[#c7c7c7]">{d.info}</p>}
                </div>
              </div>
              {d.progress !== undefined && (
                <div className="mt-[9px] h-1 w-[334px] rounded-full bg-[#757575]">
                  <div className="h-1 rounded-full bg-[#a8c7fa]" style={{ width: `${d.progress}%` }} />
                </div>
              )}
            </li>
          ))}
        </ul>
        <div className="flex w-5 justify-center bg-[#f1f1f1] pt-[22px]"><span className="h-[233px] w-0.5 bg-[#8b8b8b]" /></div>
      </div>
      <button className="flex h-[55px] items-center justify-between border-t border-[#5f5f5f] pr-6 pb-2 pl-[25px]">
        <span className="text-[16px] font-medium">Histórico de transferências completo</span>
        <MdOpenInNew className="size-6 text-[#9a9a9a]" />
      </button>
    </div>
  );
}

function Browser() {
  return (
    <section className="relative flex flex-col bg-white">
      <div className="flex h-[50px] items-end bg-[#202221] pl-2 text-[15px] text-[#d6d6d6]">
        <button aria-label="Pesquisar separadores" className="mb-2 flex h-[34px] w-[35px] items-center justify-center rounded-[10px] bg-[#3c3c3c]">
          <MdExpandMore className="size-5" />
        </button>
        <div className="flex h-[42px] w-[305px] items-center pb-2 pl-[17px]">
          <BrazilIcon />
          <span className="ml-2.5 flex-1 text-[14px]">Portal de Dados Abertos</span>
          <button aria-label="Fechar separador" className="mr-[18px]"><MdClose className="size-[19px]" /></button>
        </div>
        <div className="relative flex h-[43px] w-[289px] items-center rounded-t-[12px] bg-[#3c3c3c] pr-2.5 pb-2 pl-[13px]">
          <svg viewBox="0 0 10 10" className="absolute bottom-0 -left-2.5 size-2.5" aria-hidden="true"><path d="M10 0v10H0A10 10 0 0 0 10 0z" fill="#3c3c3c" /></svg>
          <svg viewBox="0 0 10 10" className="absolute -right-2.5 bottom-0 size-2.5" aria-hidden="true"><path d="M0 0v10h10A10 10 0 0 1 0 0z" fill="#3c3c3c" /></svg>
          <svg viewBox="0 0 20 20" className="size-5" aria-hidden="true"><path d="M5 1.500c10 .5 11 16 0 17" fill="none" stroke="#566077" strokeWidth="2" /></svg>
          <span className="ml-[7px] w-[210px] overflow-hidden text-[14px] whitespace-nowrap text-[#e3e3e3] [mask-image:linear-gradient(90deg,#000_88%,transparent)]">Index of /CNPJ/dados_abertos_c</span>
          <button aria-label="Fechar separador" className="ml-auto"><MdClose className="size-[19px]" /></button>
        </div>
        <button aria-label="Novo separador" className="mb-[13px] ml-[14px]"><MdAdd className="size-[22px]" /></button>
        <div className="mr-5 mb-4 ml-auto flex items-center gap-[42px] text-white">
          <button aria-label="Minimizar"><Minus className="size-[17px]" strokeWidth={1.6} /></button>
          <button aria-label="Restaurar"><RestoreIcon className="size-3.5" /></button>
          <button aria-label="Fechar"><X className="size-[18px]" strokeWidth={1.6} /></button>
        </div>
      </div>

      <div className="flex h-[59px] items-center border-b border-[#4a4a4a] bg-[#3c3c3c] text-[#c7c7c7]">
        <div className="flex w-[196px] items-center gap-[22px] pl-4">
          <button aria-label="Retroceder"><MdArrowBack className="size-[23px]" /></button>
          <button aria-label="Avançar"><MdArrowForward className="size-[23px] text-[#7c7c7c]" /></button>
          <button aria-label="Parar"><MdClose className="size-[23px]" /></button>
          <button aria-label="Página inicial">
            <svg viewBox="0 0 24 24" className="size-[23px]" fill="currentColor" aria-hidden="true"><path d="M6 19h3v-6h6v6h3v-9l-6-4.500L6 10zM4 21V9l8-6 8 6v12h-7v-6h-2v6z" /></svg>
          </button>
        </div>
        <div className="flex h-[42px] flex-1 items-center rounded-full bg-[#282828] pr-5 pl-[5px]">
          <button aria-label="Informações do site" className="flex size-[30px] items-center justify-center rounded-full bg-[#3c3c3c]">
            <svg viewBox="0 0 18 18" className="size-[18px]" fill="none" stroke="#d6d6d6" strokeWidth="2" aria-hidden="true">
              <circle cx="4" cy="4.500" r="2.300" /><path d="M9.500 4.500h6.500M1.500 13.500H8" /><circle cx="13.500" cy="13.500" r="2.300" />
            </svg>
          </button>
          <input
            aria-label="Endereço"
            defaultValue="dadosabertos.rfb.gov.br/CNPJ/dados_abertos_cnpj/2024-09/"
            className="ml-2.5 min-w-0 flex-1 bg-transparent text-[17px] text-[#d3d3d3] outline-none"
          />
          <button aria-label="Traduzir" className="mr-[18px]"><TranslateIcon className="size-[22px]" /></button>
          <button aria-label="Marcador"><MdStarBorder className="size-[22px]" /></button>
        </div>
        <button aria-label="Google Tradutor" className="ml-[22px]"><TranslateIcon className="size-[22px]" color /></button>
        <button aria-label="Extensões" className="ml-[23px]">
          <svg viewBox="0 0 24 24" className="size-[23px]" fill="none" stroke="currentColor" strokeWidth="2.200" aria-hidden="true">
            <path d="M4 5.500h5a2.200 2.200 0 0 1 4.500 0H18v5a2.200 2.200 0 0 1 0 5v5.500H4v-5a2.800 2.800 0 0 0 0-5.500z" />
          </svg>
        </button>
        <span className="ml-5 h-5 w-0.5 bg-[#5e5e5e]" />
        <button aria-label="Transferências" className="relative ml-3 flex size-[42px] items-center justify-center rounded-full bg-[#6b6b6b]">
          <svg viewBox="0 0 26 26" className="size-[26px]" fill="none" aria-hidden="true">
            <circle cx="13" cy="13" r="11.500" stroke="#9a9a9a" strokeWidth="2.500" />
            <path d="M13 1.500A11.500 11.500 0 0 1 24.500 13" stroke="#c6dafc" strokeWidth="2.500" />
            <path d="M13 6.500v12M8 13.500l5 5 5-5" stroke="#c6dafc" strokeWidth="2.200" />
          </svg>
          <span className="absolute right-0 bottom-0 flex h-[21px] w-5 items-center justify-center rounded-full bg-[#3c3c3c] text-[15px] leading-none text-[#d8e5fd]">6</span>
        </button>
        <button className="ml-[7px] flex h-[41px] w-[195px] items-center rounded-full bg-[#282828] pl-[15px] text-[14px] whitespace-nowrap text-[#e3e3e3]">
          <SpyIcon className="mr-2.5 size-[19px] shrink-0" />
          Navegação anónima
        </button>
        <button aria-label="Menu" className="mr-4 ml-4"><MdMoreVert className="size-6" /></button>
      </div>

      <div className="flex">
        <main className="flex-1 [font-family:'Liberation_Serif',serif] text-[20px] text-black">
          <h1 className="mt-[11px] ml-2.5 text-[40px] leading-[46px] font-bold">Index of /CNPJ/dados_abertos_cnpj/2024-09</h1>
          <table className="mt-[30px] ml-[13px] w-[509px] table-fixed border-collapse whitespace-nowrap">
            <colgroup>
              <col className="w-[29px]" />
              <col className="w-[178px]" />
              <col className="w-[152px]" />
              <col className="w-[50px]" />
              <col className="w-[100px]" />
            </colgroup>
            <thead>
              <tr className="h-[29px] text-[#0000ee]">
                <td className="p-0" />
                {["Name", "Last modified", "Size", "Description"].map((h) => (
                  <th key={h} className="p-0 text-center leading-6 font-bold"><a href="#" className="underline">{h}</a></th>
                ))}
              </tr>
              <tr className="h-[27px]"><td colSpan={5} className="p-0 pr-0.5"><hr className="border-[#9a9a9a]" /></td></tr>
            </thead>
            <tbody className="leading-6">
              <tr className="h-8">
                <td className="p-0"><BackIcon /></td>
                <td className="p-0"><a href="#" className="text-[#0000ee] underline">Parent Directory</a></td>
                <td className="p-0" />
                <td className="p-0 pr-0.5 text-right">-</td>
                <td className="p-0" />
              </tr>
              {entries.map((e) => (
                <tr key={e.name} className="h-8">
                  <td className="p-0"><ZipFileIcon /></td>
                  <td className="p-0"><a href="#" className="text-[#0000ee] underline">{e.name}</a></td>
                  <td className="p-0 pr-1 text-right">{e.date}</td>
                  <td className="p-0 text-right">{e.size}</td>
                  <td className="p-0" />
                </tr>
              ))}
            </tbody>
          </table>
        </main>
        <div className="flex w-[21px] flex-col items-center bg-[#f1f1f1]">
          <svg viewBox="0 0 21 21" className="size-[21px]" aria-hidden="true"><path d="m6 14 4.500-5 4.500 5z" fill="#a3a3a3" /></svg>
          <div className="h-[568px] w-[17px] bg-[#c1c1c1]" />
          <svg viewBox="0 0 21 21" className="mt-auto size-[21px]" aria-hidden="true"><path d="m6 8 4.500 5L15 8z" fill="#505050" /></svg>
        </div>
      </div>
      <Taskbar big />
      <DownloadsPopup />
    </section>
  );
}

export default function App() {
  return (
    <div className="flex min-h-screen items-start bg-black [font-family:'Open_Sans','Noto_Sans',sans-serif]">
      <div className="min-w-0 flex-[3]"><Explorer /></div>
      <div className="min-w-0 flex-[4]"><Browser /></div>
    </div>
  );
}
